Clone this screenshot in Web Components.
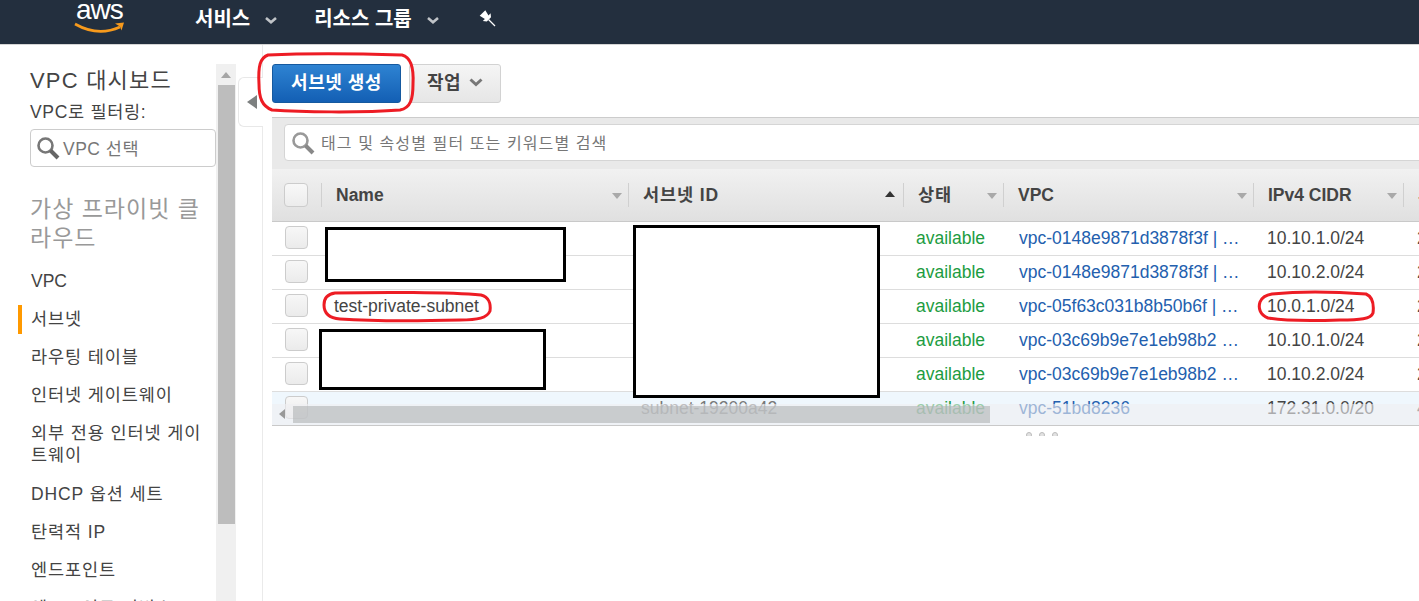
<!DOCTYPE html>
<html lang="ko">
<head>
<meta charset="utf-8">
<title>VPC 서브넷</title>
<style>
    html, body { margin: 0; height: 100%; overflow: hidden; background: #fff; }
    body { font: 17.5px "Liberation Sans", "Noto Sans CJK KR", sans-serif; color: #444; display: flex; flex-direction: column; }
</style>
</head>
<body>
<aws-topnav></aws-topnav>
<console-body>
    <aws-sidebar slot="side"></aws-sidebar>
    <subnet-toolbar></subnet-toolbar>
    <filter-band></filter-band>
    <subnet-table>
        <subnet-row name="" subnet="" vpc="vpc-0148e9871d3878f3f | …" cidr="10.10.1.0/24" last="2"></subnet-row>
        <subnet-row name="" subnet="" vpc="vpc-0148e9871d3878f3f | …" cidr="10.10.2.0/24" last="2"></subnet-row>
        <subnet-row name="test-private-subnet" subnet="" vpc="vpc-05f63c031b8b50b6f | …" cidr="10.0.1.0/24" last="2"></subnet-row>
        <subnet-row name="" subnet="" vpc="vpc-03c69b9e7e1eb98b2 …" cidr="10.10.1.0/24" last="2"></subnet-row>
        <subnet-row name="" subnet="" vpc="vpc-03c69b9e7e1eb98b2 …" cidr="10.10.2.0/24" last="2"></subnet-row>
        <subnet-row selected name="" subnet="subnet-19200a42" vpc="vpc-51bd8236" cidr="172.31.0.0/20" last="4"></subnet-row>
    </subnet-table>
</console-body>
<markup-layer></markup-layer>

<script>
    class AwsTopnav extends HTMLElement {
        constructor() {
            super();
            this.attachShadow({ mode: 'open' });
            const chevron = `<svg class="chev" width="12" height="7" viewBox="0 0 12 7"><path d="M1 1 L6 5.2 L11 1" fill="none" stroke="#c0c4c8" stroke-width="2.6"/></svg>`;
            this.shadowRoot.innerHTML = `
            <style>
                :host { display: flex; align-items: center; flex: none; height: 45px; box-sizing: border-box; background: #232f3e; border-bottom: 1px solid #d5d5d5; color: #fff; font-weight: bold; font-size: 20px; }
                .logo { display: block; align-self: flex-start; margin: 0 69px 0 74px; position: relative; width: 52px; height: 34px; }
                .logo span { display: block; font: 28px/20px "Liberation Sans", sans-serif; letter-spacing: -1px; color: #fff; padding-left: 2px; }
                .logo svg { position: absolute; left: 0; top: 21px; }
                .item { display: flex; align-items: center; gap: 15px; margin-right: 37px; position: relative; top: -5px; }
                .chev { position: relative; top: 3px; }
                .pin { position: relative; top: -4px; margin-left: 2px; }
            </style>
            <div class="logo">
                <span>aws</span>
                <svg width="52" height="13" viewBox="0 0 52 13"><path d="M1 3 Q24 16 46 6" fill="none" stroke="#f79a1c" stroke-width="2.6"/><path d="M41 2.5 L50 1.5 L47.5 9.5 L46 5.5 Z" fill="#f79a1c"/></svg>
            </div>
            <div class="item">서비스 ${chevron}</div>
            <div class="item">리소스 그룹 ${chevron}</div>
            <svg class="pin" width="18" height="18" viewBox="0 0 18 18"><path d="M7.3 1.2 L10.5 6.4 L12.6 4.3 L13 8.3 L8.8 12.5 L4.8 12.1 L6.9 10 L1.7 6.8 Z" fill="#fff"/><path d="M10.5 10.5 L17 17" stroke="#fff" stroke-width="1.3"/></svg>
            `;
        }
    }

    class ConsoleBody extends HTMLElement {
        constructor() {
            super();
            this.attachShadow({ mode: 'open' });
            this.shadowRoot.innerHTML = `
            <style>
                :host { display: flex; flex: 1; min-height: 0; }
                .side { flex: none; }
                .wrap { flex: 1; min-width: 0; display: flex; position: relative; }
                .main { flex: 1; min-width: 0; padding: 19px 0 0 9px; border-left: 1px solid #eaeaea; overflow: hidden; }
                .tab { position: absolute; left: -24px; top: 32px; width: 25px; height: 50px; box-sizing: border-box; background: #fff; border: 1px solid #e8e8e8; border-right: 0; border-radius: 6px 0 0 6px; display: flex; align-items: center; padding-left: 8px; }
                .tab i { display: block; border: 7px solid transparent; border-right: 10px solid #7d8080; border-left: 0; }
            </style>
            <div class="side"><slot name="side"></slot></div>
            <div class="wrap">
                <div class="main"><slot></slot></div>
                <div class="tab"><i></i></div>
            </div>
            `;
        }
    }

    class AwsSidebar extends HTMLElement {
        constructor() {
            super();
            this.attachShadow({ mode: 'open' });
            const items = ['VPC', '서브넷', '라우팅 테이블', '인터넷 게이트웨이', '외부 전용 인터넷 게이트웨이', 'DHCP 옵션 세트', '탄력적 IP', '엔드포인트', '엔드포인트 서비스'];
            const nav = items.map((t, i) => `<a class="${i === 1 ? 'on' : ''}">${t}</a>`).join('');
            this.shadowRoot.innerHTML = `
            <style>
                :host { display: flex; width: 262px; height: 556px; overflow: hidden; }
                .col { flex: none; width: 216px; box-sizing: border-box; padding: 23px 0 0 30px; }
                h2 { font-weight: normal; font-size: 22px; line-height: 26px; margin: 0; color: #444; letter-spacing: 1.2px; }
                label { display: block; font-size: 17.5px; line-height: 22px; margin-top: 7px; color: #444; letter-spacing: .7px; }
                .pick { display: flex; align-items: center; gap: 3px; height: 38px; box-sizing: border-box; border: 1px solid #ccc; border-radius: 4px; margin-top: 6px; padding-left: 5px; color: #777; letter-spacing: .5px; }
                .pick span { margin-top: -2px; }
                h3 { font-weight: normal; font-size: 23px; line-height: 29px; color: #999; margin: 28px 0 17px; width: 180px; letter-spacing: 1px; }
                a { display: block; line-height: 22px; margin: 0 0 16px -12px; padding: 0 0 0 9px; border-left: 4px solid transparent; color: #444; position: relative; letter-spacing: .9px; }
                a:first-child { letter-spacing: 0; }
                a:nth-child(5) { margin-bottom: 17px; }
                a.on::before { content: ''; position: absolute; left: -4px; top: -3px; bottom: -4px; width: 4px; background: #ff9900; }
                .bar { flex: none; width: 20px; margin-top: 19px; background: #f0f0f0; position: relative; padding-top: 21px; box-sizing: border-box; }
                .bar::before { content: ''; position: absolute; top: 8px; left: 5px; border: 5px solid transparent; border-bottom: 6px solid #a6a6a6; border-top: 0; }
                .thumb { width: 17px; height: 439px; margin-left: 2px; background: #bdbdbd; }
            </style>
            <div class="col">
                <h2>VPC 대시보드</h2>
                <label>VPC로 필터링:</label>
                <div class="pick">
                    <svg width="24" height="24" viewBox="0 0 24 24"><circle cx="9.5" cy="9.5" r="7" fill="none" stroke="#777" stroke-width="2.6"/><path d="M14.5 14.5 L22 22" stroke="#666" stroke-width="4"/></svg>
                    <span>VPC 선택</span>
                </div>
                <h3>가상 프라이빗 클라우드</h3>
                <nav>${nav}</nav>
            </div>
            <div class="bar"><div class="thumb"></div></div>
            `;
        }
    }

    class SubnetToolbar extends HTMLElement {
        constructor() {
            super();
            this.attachShadow({ mode: 'open' });
            this.shadowRoot.innerHTML = `
            <style>
                :host { display: flex; gap: 8px; height: 39px; margin-bottom: 14px; font-weight: bold; font-size: 18px; letter-spacing: .5px; }
                button { font: inherit; letter-spacing: inherit; height: 39px; box-sizing: border-box; border-radius: 3px; display: flex; align-items: center; justify-content: center; padding: 0 0 6px; }
                .primary { width: 129px; color: #fff; border: 1px solid #15599f; background: linear-gradient(#2e83d2, #135fb4); }
                .sub { width: 92px; color: #444; border: 1px solid #d2d2d2; background: linear-gradient(#f5f5f5, #e6e6e6); gap: 8px; }
                .sub svg { position: relative; top: 2px; }
            </style>
            <button class="primary">서브넷 생성</button>
            <button class="sub">작업
                <svg width="14" height="9" viewBox="0 0 14 9"><path d="M1.5 1.5 L7 6.5 L12.5 1.5" fill="none" stroke="#777" stroke-width="3"/></svg>
            </button>
            `;
        }
    }

    class FilterBand extends HTMLElement {
        constructor() {
            super();
            this.attachShadow({ mode: 'open' });
            this.shadowRoot.innerHTML = `
            <style>
                :host { display: block; box-sizing: border-box; height: 52px; padding: 6px 0 9px 12px; background: #e9e9e9; border-top: 1px solid #ccc; }
                .box { display: flex; align-items: center; gap: 6px; height: 37px; box-sizing: border-box; margin-right: -6px; background: #fff; border: 1px solid #d5d5d5; border-radius: 4px 0 0 4px; padding-left: 6px; color: #777; font-size: 16px; letter-spacing: 1.1px; }
                .box span { margin-top: -2px; }
            </style>
            <div class="box">
                <svg width="24" height="24" viewBox="0 0 24 24"><circle cx="9.5" cy="9.5" r="7" fill="none" stroke="#999" stroke-width="2.6"/><path d="M14.5 14.5 L22 22" stroke="#888" stroke-width="4"/></svg>
                <span>태그 및 속성별 필터 또는 키워드별 검색</span>
            </div>
            `;
        }
    }

    const COLS = 'grid-template-columns: 50px 307px 275px 100px 250px 150px 120px;';

    class SubnetTable extends HTMLElement {
        constructor() {
            super();
            this.attachShadow({ mode: 'open' });
            const heads = [['Name', ''], ['서브넷 ID', 'ko'], ['상태', 'ko'], ['VPC', ''], ['IPv4 CIDR', ''], ['사용 가능한 IPv4', 'ko']];
            const cells = heads.map(([t, cls]) => `
                <div class="th ${cls}"><span>${t}</span><i class="${t === '서브넷 ID' ? 'up' : ''}"></i></div>`).join('');
            this.shadowRoot.innerHTML = `
            <style>
                :host { display: block; position: relative; width: 1253px; }
                .head { display: grid; ${COLS} height: 53px; box-sizing: border-box; background: linear-gradient(#f1f1f1, #e0e0e0); border-bottom: 1px solid #c9c9c9; }
                .check { display: flex; align-items: center; padding-left: 12px; }
                .check b { display: block; width: 24px; height: 24px; box-sizing: border-box; border: 1px solid #ccc; border-radius: 4px; background: linear-gradient(#f8f8f8, #ececec); }
                .th { display: flex; align-items: center; justify-content: space-between; position: relative; padding: 0 7px 0 14px; font-weight: bold; color: #444; line-height: 20px; }
                .th span { white-space: nowrap; }
                .th.ko { letter-spacing: .9px; }
                .th::before { content: ''; position: absolute; left: -1px; top: 14px; bottom: 14px; width: 1px; background: #d0d0d0; }
                .th i { display: block; flex: none; border: 5.5px solid transparent; border-top: 6px solid #a9a9a9; border-bottom: 0; position: relative; top: 1px; }
                .th i.up { border-top: 0; border-bottom: 6px solid #333; top: -1px; margin-right: 2px; }
                .scroll { position: absolute; left: 0; top: 235px; right: 0; height: 21px; background: rgba(238, 239, 241, .6); }
                .arrow { position: absolute; left: 7px; top: 5px; border: 5px solid transparent; border-right: 6px solid #999; border-left: 0; }
                .thumb { position: absolute; left: 21px; top: 2px; width: 697px; height: 17px; background: rgba(175, 178, 180, .6); }
                .dots { display: flex; gap: 7px; margin: 6px 0 0 754px; height: 4px; overflow: hidden; }
                .dots i { display: block; flex: none; width: 6px; height: 6px; border-radius: 50%; border: 1px solid #bbb; box-sizing: border-box; background: #e2e2e2; }
            </style>
            <div class="head"><div class="check"><b></b></div>${cells}</div>
            <slot></slot>
            <div class="scroll"><div class="arrow"></div><div class="thumb"></div></div>
            <div class="dots"><i></i><i></i><i></i></div>
            `;
        }
    }

    class SubnetRow extends HTMLElement {
        connectedCallback() {
            if (this.shadowRoot) return;
            this.attachShadow({ mode: 'open' });
            const a = n => this.getAttribute(n) || '';
            this.shadowRoot.innerHTML = `
            <style>
                :host { display: grid; ${COLS} height: 34px; box-sizing: border-box; border-bottom: 1px solid #ddd; align-items: center; color: #444; }
                :host([selected]) { background: #eff7fd; border-bottom-color: #c9c9c9; }
                div { white-space: nowrap; overflow: hidden; padding-left: 13px; }
                .name { padding-left: 12px; }
                .check { padding-left: 13px; overflow: visible; }
                .check b { display: block; width: 23px; height: 23px; margin-top: -2px; box-sizing: border-box; border: 1px solid #ccc; border-radius: 4px; background: linear-gradient(#f7f7f7, #ebebeb); }
                .sub { padding-left: 12px; color: #777; }
                .ok { padding-left: 12px; color: #1d9c3f; }
                .vpc { padding-left: 15px; color: #2360ae; }
            </style>
            <div class="check"><b></b></div>
            <div class="name">${a('name')}</div>
            <div class="sub">${a('subnet')}</div>
            <div class="ok">available</div>
            <div class="vpc">${a('vpc')}</div>
            <div class="cidr">${a('cidr')}</div>
            <div class="last">${a('last')}</div>
            `;
        }
    }

    // hand drawn red circles and the black boxes hiding names
    class MarkupLayer extends HTMLElement {
        constructor() {
            super();
            this.attachShadow({ mode: 'open' });
            this.shadowRoot.innerHTML = `
            <style>
                :host { display: block; position: absolute; left: 0; top: 0; pointer-events: none; }
                svg { display: block; }
                .red { fill: none; stroke: #ed1c24; stroke-width: 3; }
                rect { fill: #fff; stroke: #000; stroke-width: 3; }
            </style>
            <svg width="1419" height="601" viewBox="0 0 1419 601">
                <rect x="326.5" y="228.5" width="238" height="52"/>
                <rect x="634.5" y="226.5" width="244" height="170"/>
                <rect x="320.5" y="330.5" width="224" height="58"/>
                <path class="red" d="M268 55 C310 53 370 54 402 55 C410 57 414 66 413 84 C413 98 411 108 400 110 C360 113 300 112 272 110 C262 106 259 98 259 84 C258 66 260 58 268 55 Z"/>
                <path class="red" d="M335 293 C380 292 450 292 481 295 C489 297 491 304 490 311 C487 318 478 320 460 320 C420 321 370 321 340 319 C328 318 324 312 324 305 C324 298 328 294 335 293 Z"/>
                <path class="red" d="M1272 294 C1300 291 1340 292 1366 294 C1373 297 1374 305 1373 313 C1371 319 1360 320 1340 320 C1310 321 1285 321 1268 318 C1260 315 1258 308 1260 302 C1262 297 1266 295 1272 294 Z"/>
            </svg>
            `;
        }
    }

    customElements.define('aws-topnav', AwsTopnav);
    customElements.define('console-body', ConsoleBody);
    customElements.define('aws-sidebar', AwsSidebar);
    customElements.define('subnet-toolbar', SubnetToolbar);
    customElements.define('filter-band', FilterBand);
    customElements.define('subnet-table', SubnetTable);
    customElements.define('subnet-row', SubnetRow);
    customElements.define('markup-layer', MarkupLayer);
</script>
</body>
</html>
